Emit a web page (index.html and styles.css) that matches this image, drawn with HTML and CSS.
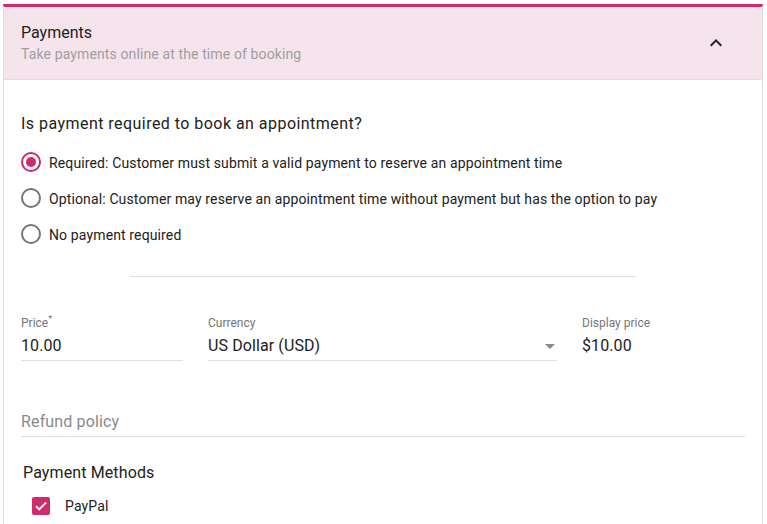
FILE: index.html
```html
<!DOCTYPE html>
<html>
<head>
<meta charset="utf-8">
<link rel="stylesheet" href="styles.css">
</head>
<body>
<div class="card">
  <div class="header">
    <div class="titles">
      <div class="title">Payments</div>
      <div class="subtitle">Take payments online at the time of booking</div>
    </div>
    <svg class="chevron" width="24" height="24" viewBox="0 0 24 24"><path d="M7.41 15.41L12 10.83l4.59 4.58L18 14l-6-6-6 6z" fill="#212121"/></svg>
  </div>
  <div class="body">
    <div class="question">Is payment required to book an appointment?</div>
    <div class="radios">
      <div class="radio-row"><span class="radio checked"></span><span class="radio-label">Required: Customer must submit a valid payment to reserve an appointment time</span></div>
      <div class="radio-row"><span class="radio"></span><span class="radio-label">Optional: Customer may reserve an appointment time without payment but has the option to pay</span></div>
      <div class="radio-row"><span class="radio"></span><span class="radio-label">No payment required</span></div>
    </div>
    <div class="divider"></div>
    <div class="fields">
      <div class="field price">
        <div class="label">Price<sup>*</sup></div>
        <div class="value">10.00</div>
      </div>
      <div class="field currency">
        <div class="label">Currency</div>
        <div class="value select"><span>US Dollar (USD)</span><span class="arrow"></span></div>
      </div>
      <div class="field display">
        <div class="label">Display price</div>
        <div class="value">$10.00</div>
      </div>
    </div>
    <div class="refund">Refund policy</div>
    <div class="methods-title">Payment Methods</div>
    <div class="check-row">
      <span class="checkbox"><svg width="18" height="18" viewBox="0 0 18 18"><path d="M4 9.2l3.2 3.2L14 5.6" fill="none" stroke="#fff" stroke-width="2"/></svg></span>
      <span class="check-label">PayPal</span>
    </div>
  </div>
</div>
</body>
</html>
```
FILE: styles.css
```css
* { box-sizing: border-box; }
html, body { margin: 0; padding: 0; background: #fff; }
body {
  font-family: Roboto, "Liberation Sans", Arial, sans-serif;
  color: #212121;
  padding: 4px 4px 0 3px;
}
.card {
  border-left: 1px solid #e0e0e0;
  border-right: 1px solid #e0e0e0;
  border-top: 3px solid #cf2a6c;
  min-height: 520px;
}
.header {
  height: 73px;
  background: #f5e4ec;
  border-bottom: 1px solid #e3dde0;
  display: flex;
  align-items: center;
  padding: 0 34px 0 17px;
}
.titles { flex: 1; }
.title { font-size: 16px; line-height: 20px; color: #212121; }
.subtitle { font-size: 14px; line-height: 20px; color: #9e9e9e; margin-top: 1px; letter-spacing: 0.12px; }
.chevron { display: block; }
.body { padding: 32px 17px 0 17px; }
.question { font-size: 16px; line-height: 24px; color: #212121; letter-spacing: 0.46px; }
.radios { margin-top: 8px; }
.radio-row {
  height: 36px;
  display: flex;
  align-items: center;
  gap: 8px;
}
.radio {
  width: 20px; height: 20px;
  border-radius: 50%;
  border: 2px solid #757575;
  display: flex; align-items: center; justify-content: center;
  flex: none;
}
.radio.checked { border-color: #cf2a6c; }
.radio.checked::after {
  content: "";
  width: 10px; height: 10px;
  border-radius: 50%;
  background: #cf2a6c;
}
.radio-label { font-size: 14px; color: #212121; letter-spacing: 0.13px; padding-top: 1px; }
.divider {
  width: 506px;
  height: 1px;
  background: #e0e0e0;
  margin: 24px auto 0 auto;
}
.fields {
  display: flex;
  gap: 25px;
  margin-top: 38px;
}
.field { border-bottom: 1px solid #e0e0e0; padding-bottom: 2px; }
.field.display { border-bottom-color: transparent; flex: 1; }
.price { width: 162px; }
.currency { width: 349px; }
.label { font-size: 12px; line-height: 16px; color: #757575; }
.label sup { font-size: 9px; line-height: 0; vertical-align: 5px; }
.value { font-size: 16px; line-height: 24px; margin-top: 3px; color: #212121; letter-spacing: 0.1px; }
.select { display: flex; justify-content: space-between; align-items: center; padding-right: 2px; }
.arrow {
  width: 0; height: 0;
  border-left: 5px solid transparent;
  border-right: 5px solid transparent;
  border-top: 5px solid #8a8a8a;
  margin-top: 1px;
}
.refund {
  margin-top: 48px;
  font-size: 16px;
  line-height: 24px;
  color: #8a8a8a;
  padding-top: 1px;
  padding-bottom: 2px;
  border-bottom: 1px solid #e0e0e0;
  letter-spacing: 0.15px;
}
.methods-title {
  margin-top: 24px;
  padding-left: 2px;
  font-size: 16px;
  line-height: 24px;
  color: #212121;
  letter-spacing: 0.12px;
}
.check-row {
  display: flex;
  align-items: center;
  height: 42px;
  padding-left: 11px;
  gap: 15px;
}
.checkbox {
  width: 18px; height: 18px;
  border-radius: 2px;
  background: #cf2a6c;
  display: block;
}
.checkbox svg { display: block; }
.check-label { font-size: 14px; color: #212121; letter-spacing: 0.15px; }
```
